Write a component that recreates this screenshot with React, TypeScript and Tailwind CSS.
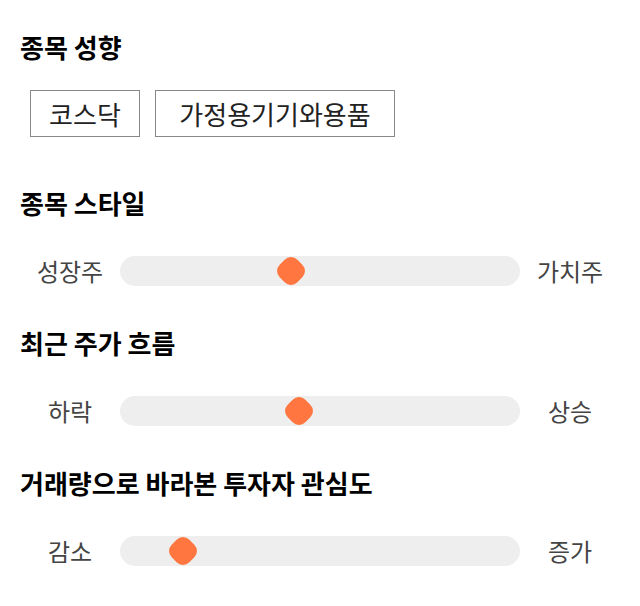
const tags = [
  { label: '코스닥', width: 'w-[110px]' },
  { label: '가정용기기와용품', width: 'w-[240px]' },
];

const sliders = [
  { title: '종목 스타일', left: '성장주', right: '가치주', value: 0.427 },
  { title: '최근 주가 흐름', left: '하락', right: '상승', value: 0.447 },
  { title: '거래량으로 바라본 투자자 관심도', left: '감소', right: '증가', value: 0.158 },
];

function Heading({ children }: { children: React.ReactNode }) {
  return <h3 className="px-[20px] text-[26px] font-bold leading-[30px] text-black">{children}</h3>;
}

function Meter({ left, right, value }: { left: string; right: string; value: number }) {
  return (
    <div className="mt-[38px] flex h-[30px] items-center px-[20px]">
      <span className="w-[100px] text-center text-[24px] text-[#444]">{left}</span>
      <div className="relative h-[30px] flex-1 rounded-full bg-[#eeeeee]">
        <span
          className="absolute top-1/2 h-[25px] w-[25px] -translate-x-1/2 -translate-y-1/2 rotate-45 rounded-[9px] bg-[#ff7640]"
          style={{ left: `${value * 100}%` }}
        />
      </div>
      <span className="w-[100px] text-center text-[24px] text-[#444]">{right}</span>
    </div>
  );
}

export default function App() {
  return (
    <div
      className="min-h-[606px] w-[640px] bg-white pt-[32px]"
      style={{ fontFamily: '"Noto Sans CJK KR", "Noto Sans", sans-serif' }}
    >
      <Heading>종목 성향</Heading>
      <div className="mt-[28px] flex gap-[15px] pl-[30px]">
        {tags.map((tag) => (
          <span
            key={tag.label}
            className={`flex h-[47px] items-center justify-center border border-[#888] text-[26px] text-[#222] ${tag.width}`}
          >
            {tag.label}
          </span>
        ))}
      </div>

      {sliders.map((item, i) => (
        <section key={item.title} className={i === 0 ? 'mt-[51px]' : 'mt-[42px]'}>
          <Heading>{item.title}</Heading>
          <Meter left={item.left} right={item.right} value={item.value} />
        </section>
      ))}
    </div>
  );
}
